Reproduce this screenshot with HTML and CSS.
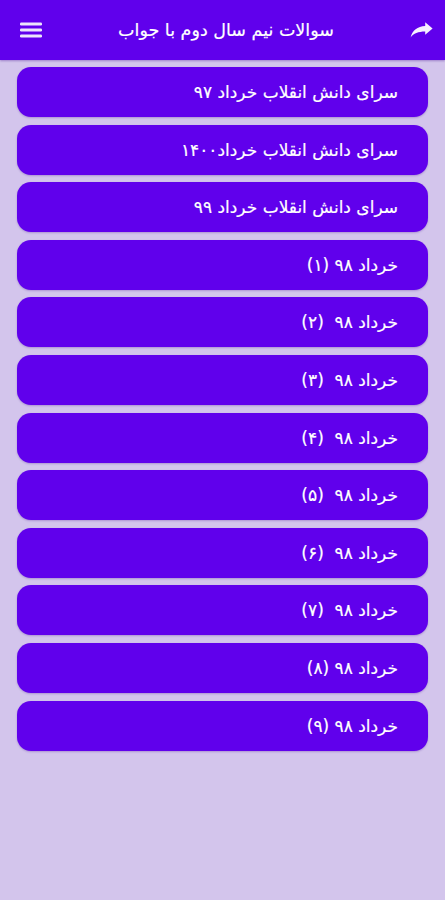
FILE: index.html
```html
<!DOCTYPE html>
<html lang="fa">
<head>
<meta charset="utf-8">
<link rel="stylesheet" href="styles.css">
</head>
<body>
<header class="appbar">
  <button class="icon-btn menu" aria-label="menu">
    <svg width="22" height="16" viewBox="0 0 22 16"><rect x="0" y="0.5" width="22" height="3" rx="1.2"/><rect x="0" y="6.5" width="22" height="3" rx="1.2"/><rect x="0" y="12.5" width="22" height="3" rx="1.2"/></svg>
  </button>
  <h1 class="title">سوالات نیم سال دوم با جواب</h1>
  <button class="icon-btn share" aria-label="share">
    <svg width="23" height="16" viewBox="0 0 23 16"><path d="M22.6 6.4 L15.2 0.2 V3.9 C7.6 4.3 2.2 8.2 0.6 15.6 C3.6 11.2 8.2 9.6 15.2 9.5 V12.8 Z" stroke-linejoin="round"/></svg>
  </button>
</header>
<main class="list" dir="rtl">
  <div class="item">سرای دانش انقلاب خرداد ۹۷</div>
  <div class="item">سرای دانش انقلاب خرداد۱۴۰۰</div>
  <div class="item">سرای دانش انقلاب خرداد ۹۹</div>
  <div class="item">خرداد ۹۸ (۱)</div>
  <div class="item">خرداد ۹۸ &nbsp;(۲)</div>
  <div class="item">خرداد ۹۸ &nbsp;(۳)</div>
  <div class="item">خرداد ۹۸ &nbsp;(۴)</div>
  <div class="item">خرداد ۹۸ &nbsp;(۵)</div>
  <div class="item">خرداد ۹۸ &nbsp;(۶)</div>
  <div class="item">خرداد ۹۸ &nbsp;(۷)</div>
  <div class="item">خرداد ۹۸ (۸)</div>
  <div class="item">خرداد ۹۸ (۹)</div>
</main>
</body>
</html>
```
FILE: styles.css
```css
html, body {
  margin: 0;
  padding: 0;
}
body {
  background: #d3c5ec;
  font-family: "DejaVu Sans", "Noto Sans", sans-serif;
  min-height: 900px;
}
.appbar {
  height: 60px;
  background: #6000ec;
  display: flex;
  align-items: center;
  justify-content: space-between;
  padding: 0 12px 0 20px;
  box-sizing: border-box;
  box-shadow: 0 1px 2px rgba(60, 0, 140, 0.35);
}
.icon-btn {
  background: none;
  border: 0;
  padding: 0;
  display: flex;
  align-items: center;
  justify-content: center;
}
.menu svg { fill: #ece4fb; }
.share svg { fill: #f6f1ff; }
.title {
  margin: 0;
  color: #ffffff;
  font-size: 17.5px;
  font-weight: normal;
  -webkit-text-stroke: 0.2px #ffffff;
  direction: rtl;
}
.list {
  display: flex;
  flex-direction: column;
  gap: 7.6px;
  padding: 7px 17px;
}
.item {
  height: 50px;
  background: #6000ec;
  border-radius: 14px;
  color: #ffffff;
  font-size: 17px;
  -webkit-text-stroke: 0.2px #ffffff;
  display: flex;
  align-items: center;
  padding: 0 30px;
  text-align: right;
  box-shadow: 0 1px 2px rgba(60, 0, 140, 0.25);
}
```
